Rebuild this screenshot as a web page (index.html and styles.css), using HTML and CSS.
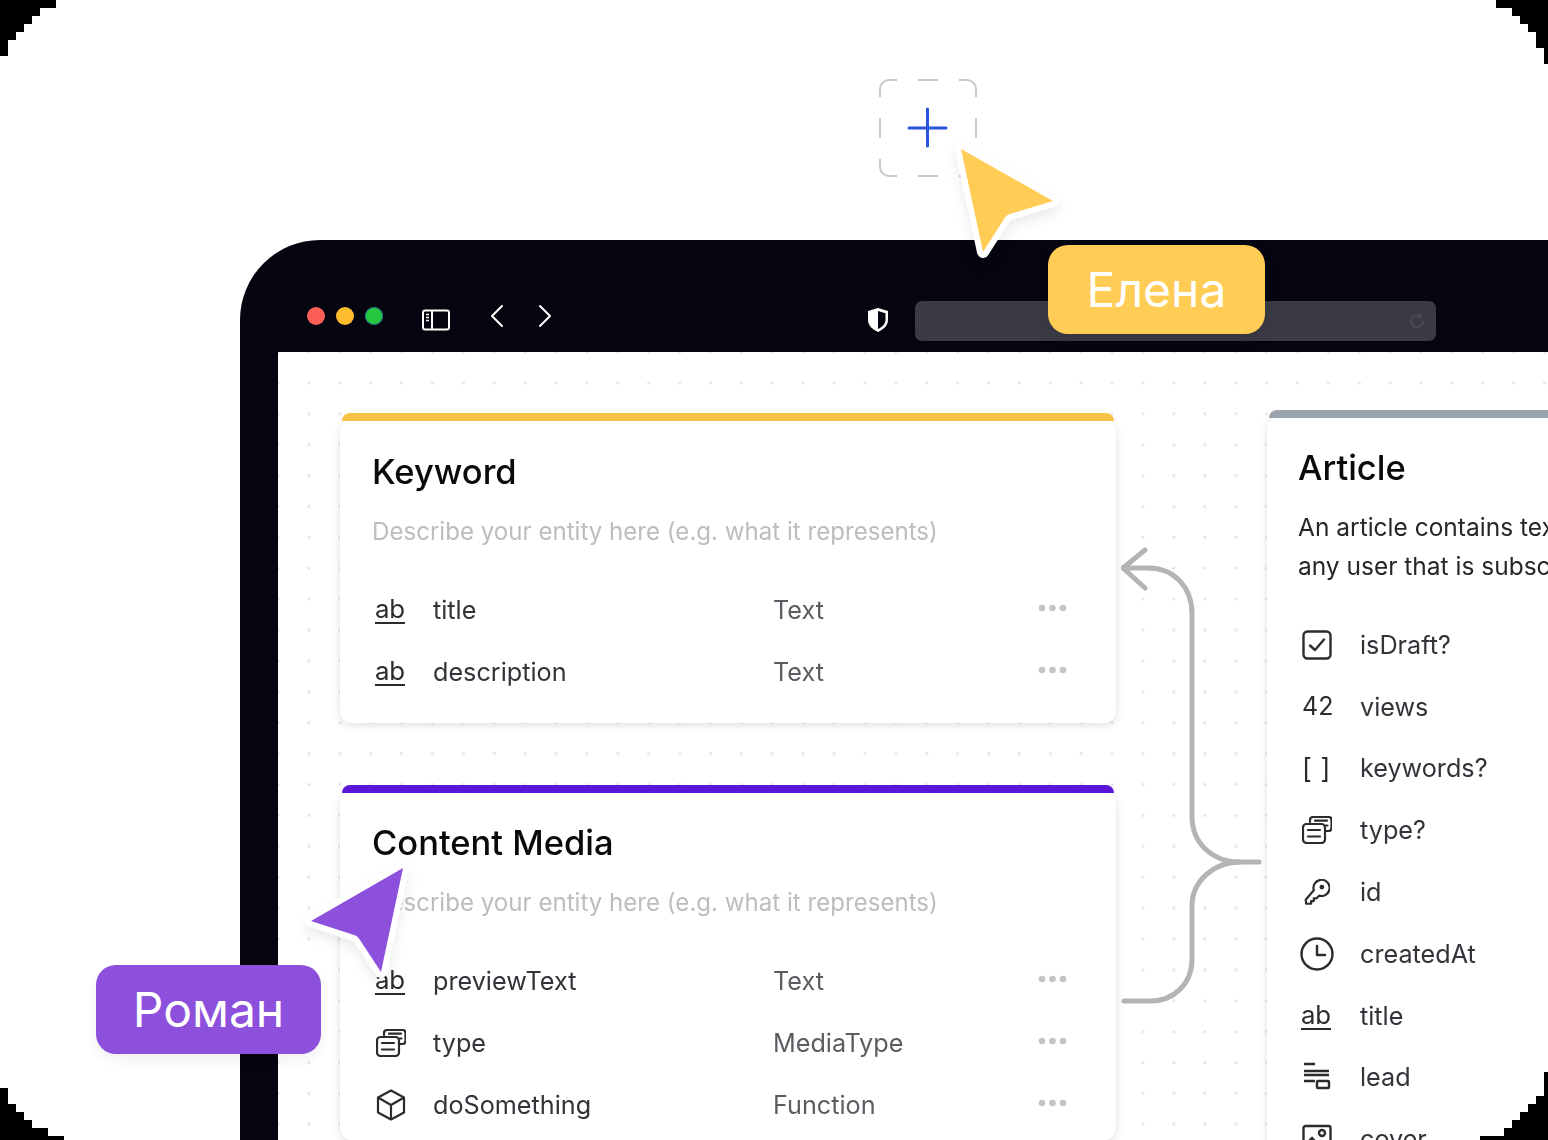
FILE: index.html
```html
<!DOCTYPE html>
<html lang="en">
<head>
<meta charset="utf-8">
<title>Schema editor</title>
<link rel="stylesheet" href="styles.css">
</head>
<body>
<svg width="0" height="0" class="defs">
  <defs>
    <symbol id="i-stack" viewBox="0 0 30 28" fill="none" stroke="currentColor" stroke-width="2.200" stroke-linecap="round" stroke-linejoin="round">
      <path d="M8 6V4.200C8 2.400 9.400 1 11.200 1h15.300c1.800 0 3 1.400 3 3.200v7.600c0 1.800-1.200 3.200-3 3.200H23"/>
      <rect x="1" y="8" width="22" height="19" rx="3.500"/>
      <path d="M6 14h12M6 20.500h12M13 4.700h12M24 9.500h1.500"/>
    </symbol>
    <symbol id="i-dots" viewBox="0 0 30 8" fill="#c4c4c4">
      <circle cx="4" cy="4" r="3.300"/><circle cx="14.500" cy="4" r="3.300"/><circle cx="25" cy="4" r="3.300"/>
    </symbol>
  </defs>
</svg>
<main class="stage">
  <div class="corner corner-tl"><svg width="56" height="56" shape-rendering="crispEdges"><path d="M0 0H56V8H40V16H32V24H24V32H16V40H8V56H0Z"/></svg></div>
  <div class="corner corner-tr"><svg width="56" height="64" shape-rendering="crispEdges"><path d="M56 0H4V8H20V16H28V24H36V32H44V48H52V64H56Z"/></svg></div>
  <div class="corner corner-bl"><svg width="64" height="52" shape-rendering="crispEdges"><path d="M0 52H64V48H48V40H32V32H24V24H16V16H8V0H0Z"/></svg></div>
  <div class="corner corner-br"><svg width="68" height="68" shape-rendering="crispEdges"><path d="M68 68H0V64H24V56H32V48H40V40H48V32H56V24H64V0H68Z"/></svg></div>

  <div class="add-box">
    <svg width="98" height="98" viewBox="0 0 98 98" fill="none">
      <path d="M1 18V10A9 9 0 0 1 10 1H18M39 1H59M80 1H88A9 9 0 0 1 97 10V18M97 39V59M97 80V88A9 9 0 0 1 88 97H80M59 97H39M18 97H10A9 9 0 0 1 1 88V80M1 59V39" stroke="#c9c9c9" stroke-width="2"/>
      <path d="M30 49h37M48.500 30v37" stroke="#2b55dc" stroke-width="3" stroke-linecap="round"/>
    </svg>
  </div>

  <section class="window">
    <header class="toolbar">
      <div class="lights"><span class="light red"></span><span class="light amber"></span><span class="light green"></span></div>
      <svg class="tb-icon sidebar" width="28" height="22" viewBox="0 0 28 22" fill="none" stroke="#fff" stroke-width="2"><rect x="1" y="1.500" width="26" height="19" rx="2"/><path d="M10 1.500v19"/><path d="M4 5.500h3M4 8.500h3M4 11.500h3" stroke-width="1.600"/></svg>
      <svg class="tb-icon back" width="14" height="24" viewBox="0 0 14 24" fill="none" stroke="#fff" stroke-width="2" stroke-linecap="round" stroke-linejoin="round"><path d="M12 2 2 12l10 10"/></svg>
      <svg class="tb-icon forward" width="14" height="24" viewBox="0 0 14 24" fill="none" stroke="#fff" stroke-width="2" stroke-linecap="round" stroke-linejoin="round"><path d="m2 2 10 10L2 22"/></svg>
      <svg class="tb-icon shield" width="22" height="26" viewBox="0 0 22 26"><path d="M11 1 21 4v9c0 5.500-4.500 9.500-10 12C5.500 22.500 1 18.500 1 13V4Z" fill="#fff"/><path d="M11 4 18.500 6.200V13c0 4-3.200 7-7.500 9Z" fill="#05050f"/></svg>
      <div class="address"><svg class="reload" width="18" height="18" viewBox="0 0 18 18" fill="none" stroke="#4a4a54" stroke-width="2"><path d="M15 9a6 6 0 1 1-2-4.500M13 1v4h-4"/></svg></div>
    </header>
    <div class="canvas">
      <div class="col-left">
        <article class="card card-yellow">
          <h2 class="card-title">Keyword</h2>
          <p class="card-desc">Describe your entity here (e.g. what it represents)</p>
          <ul class="fields">
            <li class="field"><span class="ico"><span class="ab">ab</span></span><span class="name">title</span><span class="type">Text</span><svg class="more" width="30" height="8"><use href="#i-dots"/></svg></li>
            <li class="field"><span class="ico"><span class="ab">ab</span></span><span class="name">description</span><span class="type">Text</span><svg class="more" width="30" height="8"><use href="#i-dots"/></svg></li>
          </ul>
        </article>
        <article class="card card-violet">
          <h2 class="card-title">Content Media</h2>
          <p class="card-desc">Describe your entity here (e.g. what it represents)</p>
          <ul class="fields">
            <li class="field"><span class="ico"><span class="ab">ab</span></span><span class="name">previewText</span><span class="type">Text</span><svg class="more" width="30" height="8"><use href="#i-dots"/></svg></li>
            <li class="field"><span class="ico"><svg width="30" height="28"><use href="#i-stack"/></svg></span><span class="name">type</span><span class="type">MediaType</span><svg class="more" width="30" height="8"><use href="#i-dots"/></svg></li>
            <li class="field"><span class="ico"><svg width="30" height="32" viewBox="0 0 30 32" fill="none" stroke="currentColor" stroke-width="2.200" stroke-linejoin="round"><path d="M15 1.500 28 8.500v15l-13 7-13-7v-15Z"/><path d="m2 8.500 13 7.500 13-7.500M15 16v14.500"/></svg></span><span class="name">doSomething</span><span class="type">Function</span><svg class="more" width="30" height="8"><use href="#i-dots"/></svg></li>
          </ul>
        </article>
      </div>
      <article class="card card-grey">
        <h2 class="card-title">Article</h2>
        <p class="card-body">An article contains text and can be read by<br>any user that is subscribed to the newsletter</p>
        <ul class="fields">
          <li class="field"><span class="ico"><svg width="30" height="30" viewBox="0 0 30 30" fill="none" stroke="currentColor" stroke-width="2.400" stroke-linecap="round" stroke-linejoin="round"><rect x="1.500" y="1.500" width="27" height="27" rx="4"/><path d="m8 15.500 5 4.500 9-10.500"/></svg></span><span class="name">isDraft?</span></li>
          <li class="field"><span class="ico num">42</span><span class="name">views</span></li>
          <li class="field"><span class="ico brackets">[ ]</span><span class="name">keywords?</span></li>
          <li class="field"><span class="ico"><svg width="30" height="28"><use href="#i-stack"/></svg></span><span class="name">type?</span></li>
          <li class="field"><span class="ico"><svg class="key" width="27" height="27" viewBox="0 0 30 30" fill="none" stroke="currentColor" stroke-width="2.400" stroke-linecap="round" stroke-linejoin="round"><path d="M12 12.500a9 9 0 1 1 6 6l-3 3h-3v3H9v3H3.500L3 23Z"/><circle cx="21" cy="9" r="1.500"/></svg></span><span class="name">id</span></li>
          <li class="field"><span class="ico"><svg class="clock" width="34" height="34" viewBox="0 0 34 34" fill="none" stroke="currentColor" stroke-width="2.400" stroke-linecap="round" stroke-linejoin="round"><circle cx="17" cy="17" r="15.500"/><path d="M17 9v9h8"/></svg></span><span class="name">createdAt</span></li>
          <li class="field"><span class="ico"><span class="ab">ab</span></span><span class="name">title</span></li>
          <li class="field"><span class="ico"><svg width="30" height="30" viewBox="0 0 30 30" fill="none" stroke="currentColor" stroke-width="2.400"><path d="M2 2h11M2 9h25M2 13h25M2 19h11"/><rect x="15" y="19" width="12" height="7" rx="1"/></svg></span><span class="name">lead</span></li>
          <li class="field"><span class="ico"><svg width="30" height="30" viewBox="0 0 30 30" fill="none" stroke="currentColor" stroke-width="2.400"><rect x="1.500" y="2" width="27" height="26" rx="2"/><circle cx="20" cy="9" r="3"/><path d="m2 22 8-8 8 9"/></svg></span><span class="name">cover</span></li>
        </ul>
      </article>
    </div>
    <svg class="links" width="150" height="470" viewBox="0 0 150 470" fill="none" stroke="#b4b4b4" stroke-width="5" stroke-linecap="round" stroke-linejoin="round">
      <path d="M24 6 2 24l22 20"/>
      <path d="M2 24H27C53 24 71 43 71 70V272C71 300 92 318 119 318"/>
      <path d="M3 457H29C53 457 71 440 71 415V362C71 336 94 318 119 318H138"/>
    </svg>
  </section>

  <svg class="pointer pointer-yellow" width="110" height="130" viewBox="0 0 110 130">
    <path class="pointer-shape shape-yellow" d="M9 6 101 58 58 71Q54 72 52 76L31 109Z"/>
  </svg>
  <div class="tag tag-yellow">Елена</div>

  <svg class="pointer pointer-violet" width="110" height="120" viewBox="0 0 110 120">
    <path class="pointer-shape shape-violet" d="M102 6 10 59 53 73Q57 74 59 78L80 110Z"/>
  </svg>
  <div class="tag tag-violet">Роман</div>
</main>
</body>
</html>
```
FILE: styles.css
```css
* { box-sizing: border-box; }
html, body { margin: 0; padding: 0; background: #fff; }
body { font-family: Inter, "Noto Sans", sans-serif; overflow: hidden; }
ul { list-style: none; margin: 0; padding: 0; }
h2, p { margin: 0; }
.defs { position: absolute; }

.stage { position: relative; width: 1548px; height: 1140px; overflow: hidden; padding: 240px 0 0 240px; background: #fff; }

.corner { position: absolute; z-index: 5; line-height: 0; }
.corner svg { display: block; fill: #000; }
.corner-tl { left: 0; top: 0; }
.corner-tr { right: 0; top: 0; }
.corner-bl { left: 0; bottom: 0; }
.corner-br { right: 0; bottom: 0; }

.add-box { position: absolute; left: 879px; top: 79px; line-height: 0; }

.window { position: relative; width: 1400px; height: 1000px; background: #05050f; border-radius: 80px 0 0 0; }

.toolbar { height: 112px; display: flex; align-items: flex-start; padding: 67px 0 0 67px; filter: blur(.3px); }
.lights { display: flex; gap: 11px; }
.light { width: 18px; height: 18px; border-radius: 50%; }
.red { background: #fb5f57; }
.amber { background: #fdbc2e; }
.green { background: #27c840; box-shadow: inset 0 0 0 1px #1d6c8c; }
.tb-icon { display: block; flex: none; }
.sidebar { margin: 2px 0 0 39px; }
.back { margin: -3px 0 0 40px; }
.forward { margin: -3px 0 0 34px; }
.shield { margin: 0 0 0 315px; }
.address { margin: -6px 0 0 26px; width: 521px; height: 40px; background: #3a3a45; border-radius: 7px; display: flex; justify-content: flex-end; align-items: center; padding-right: 10px; }

.canvas { margin-left: 38px; height: 888px; background-color: #fff; background-image: radial-gradient(circle, #e6e6e6 1.200px, transparent 1.700px); background-size: 30.900px 30.900px; background-position: 15.500px 15.500px; display: flex; align-items: flex-start; padding: 68px 0 0 62px; gap: 151px; overflow: hidden; filter: blur(.35px); }

.col-left { display: flex; flex-direction: column; gap: 69px; width: 776px; flex: none; }
.card { position: relative; background: #fff; border-radius: 12px; box-shadow: 0 2px 9px rgba(0,0,0,.13); padding: 0 30px 0 32px; flex: none; }
.card::before { content: ""; position: absolute; left: 2px; right: 2px; top: -7px; height: 8px; border-radius: 10px 10px 0 0; }
.card-yellow { height: 303px; }
.card-yellow::before { background: #f6c244; }
.card-violet { height: 348px; }
.card-violet::before { background: #5a17d8; }
.card-grey { width: 400px; height: 760px; margin-top: -3px; padding-left: 31px; }
.card-grey::before { background: #9aa3ad; }
.card-title { font-size: 34.500px; font-weight: 500; line-height: 40px; color: #0a0a0a; padding-top: 31px; }
.card-yellow .card-title { padding-top: 32px; }
.card-desc { font-size: 24.100px; line-height: 32px; color: #bdbdbd; margin-top: 24px; white-space: nowrap; }
.card-body { font-size: 24.500px; line-height: 39px; color: #26262b; margin-top: 20px; white-space: nowrap; }

.fields { margin-top: 31px; }
.card-grey .fields { margin-top: 28px; }
.field { height: 62px; display: flex; align-items: center; font-size: 25.200px; color: #33333a; white-space: nowrap; }
.card-grey .field { height: 61.800px; }
.ico { width: 61px; flex: none; color: #2b2b30; display: flex; align-items: center; line-height: 1; padding-left: 4px; }
.card-grey .ico { width: 62px; }
.ico svg { display: block; flex: none; }
.ab { display: block; font-size: 25.800px; line-height: 25px; letter-spacing: -.2px; margin: 0 0 0 -1px; border-bottom: 2px solid currentColor; padding-bottom: 1px; }
.num { font-size: 25px; }
.brackets { font-size: 27px; letter-spacing: .5px; }
.key { margin-left: 1px; }
.clock { margin-left: -2px; }
.name { width: 340px; flex: none; }
.type { width: 265px; flex: none; color: #5c5c62; }
.more { display: block; flex: none; margin-top: -4px; }

.links { position: absolute; left: 881px; top: 304px; }

.pointer { position: absolute; z-index: 3; overflow: visible; filter: drop-shadow(0 6px 6px rgba(0,0,0,.08)); }
.pointer-yellow { left: 952px; top: 143px; }
.pointer-violet { left: 301px; top: 862px; }
.pointer-shape { stroke: #fff; stroke-width: 12; stroke-linejoin: round; paint-order: stroke; }
.shape-yellow { fill: #ffcd56; }
.shape-violet { fill: #8c50dc; }

.tag { position: absolute; z-index: 4; height: 89px; border-radius: 20px; color: #fff; font-size: 48px; display: flex; align-items: center; justify-content: center; box-shadow: 0 6px 12px rgba(0,0,0,.06); }
.tag-yellow { left: 1048px; top: 245px; width: 217px; background: #ffcd56; }
.tag-violet { left: 96px; top: 965px; width: 225px; background: #8c50dc; }
```
